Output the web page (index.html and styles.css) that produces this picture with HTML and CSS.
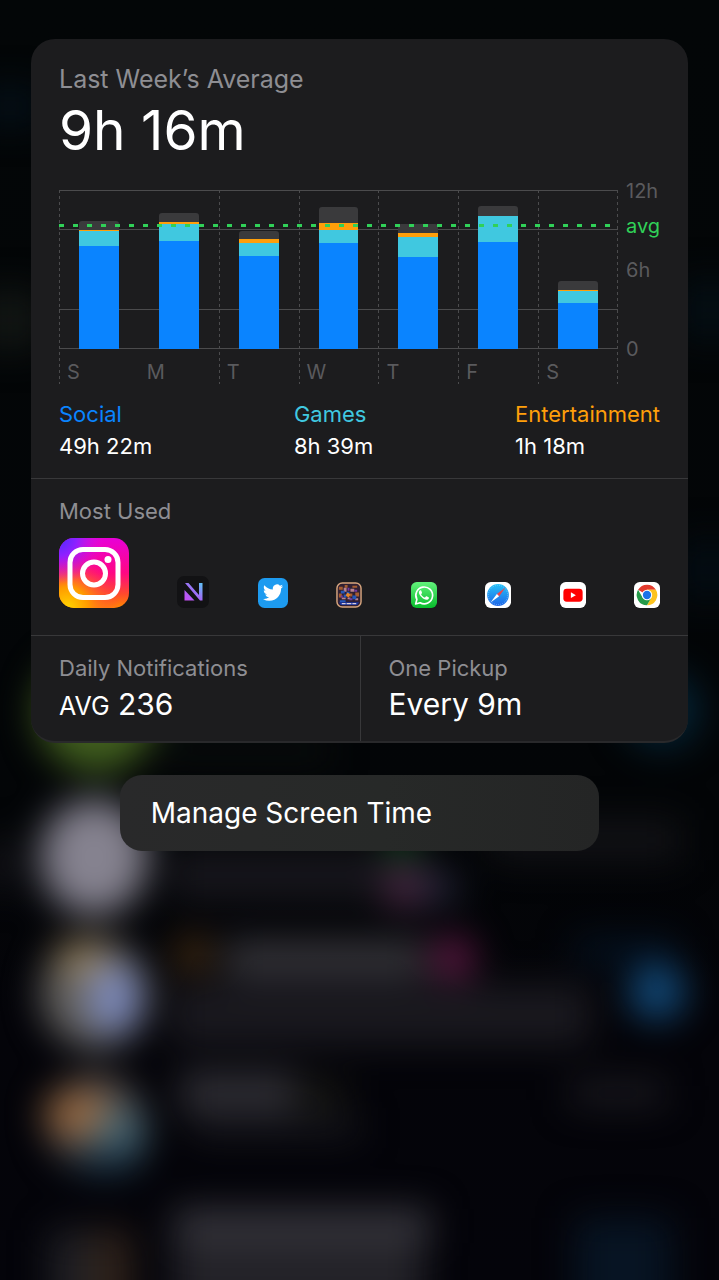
FILE: index.html
```html
<!DOCTYPE html>
<html lang="en">
<head>
<meta charset="utf-8">
<meta name="viewport" content="width=device-width, initial-scale=1">
<title>Screen Time</title>
<link rel="stylesheet" href="styles.css">
</head>
<body>
<svg class="backdrop" viewBox="0 0 719 1280" preserveAspectRatio="xMidYMid slice" aria-hidden="true">
  <defs>
    <filter id="soft" filterUnits="userSpaceOnUse" x="-60" y="-60" width="839" height="1400" color-interpolation-filters="sRGB"><feGaussianBlur stdDeviation="18"/></filter>
    <linearGradient id="ground" x1="0" y1="0" x2="0" y2="1">
      <stop offset="0" stop-color="#030607"/><stop offset=".65" stop-color="#030507"/><stop offset=".8" stop-color="#040409"/><stop offset="1" stop-color="#04040a"/>
    </linearGradient>
  </defs>
  <rect width="719" height="1280" fill="url(#ground)"/>
  <g filter="url(#soft)">
    <rect x="-20" y="88" width="60" height="36" fill="#041019"/>
    <rect x="-20" y="290" width="60" height="60" fill="#121614"/>
    <rect x="680" y="280" width="60" height="60" fill="#040e14"/>
    <rect x="680" y="540" width="60" height="60" fill="#030c13"/>
    <circle cx="97" cy="712" r="60" fill="#42601f"/>
    <circle cx="662" cy="710" r="38" fill="#042436"/>
    <rect x="160" y="740" width="170" height="20" fill="#0b0f0d"/>
    <rect x="-20" y="840" width="40" height="50" fill="#111116"/>
    <ellipse cx="94" cy="857" rx="54" ry="58" fill="#85828f"/>
    <rect x="170" y="850" width="260" height="50" fill="#17161c"/>
    <rect x="490" y="820" width="190" height="40" fill="#121216"/>
    <circle cx="402" cy="842" r="16" fill="#0c4a1a"/>
    <circle cx="404" cy="888" r="20" fill="#502a48"/>
    <circle cx="440" cy="888" r="18" fill="#25263a"/>
    <circle cx="95" cy="994" r="54" fill="#646260"/>
    <ellipse cx="84" cy="958" rx="30" ry="18" fill="#94805c"/>
    <ellipse cx="114" cy="998" rx="25" ry="36" fill="#7b89bd"/>
    <circle cx="193" cy="954" r="19" fill="#452d12"/>
    <rect x="225" y="940" width="200" height="38" fill="#353439"/>
    <circle cx="453" cy="958" r="22" fill="#5e1843"/>
    <rect x="170" y="985" width="420" height="60" fill="#1a191f"/>
    <rect x="575" y="940" width="100" height="22" fill="#041425"/>
    <circle cx="657" cy="992" r="28" fill="#124a7a"/>
    <circle cx="96" cy="1122" r="48" fill="#4a484a"/>
    <ellipse cx="80" cy="1114" rx="36" ry="25" fill="#966841"/>
    <ellipse cx="120" cy="1134" rx="25" ry="27" fill="#4a6a78"/>
    <ellipse cx="106" cy="1160" rx="34" ry="14" fill="#1b3345"/>
    <rect x="180" y="1072" width="115" height="40" fill="#302f35"/>
    <rect x="295" y="1078" width="50" height="34" fill="#151512"/>
    <rect x="190" y="1118" width="170" height="20" fill="#17171d"/>
    <rect x="570" y="1080" width="95" height="26" fill="#1a191f"/>
    <rect x="174" y="1208" width="256" height="36" fill="#34333a"/>
    <rect x="174" y="1244" width="250" height="90" fill="#232228"/>
    <rect x="50" y="1230" width="55" height="100" fill="#202025"/>
    <rect x="90" y="1230" width="42" height="100" fill="#2f221a"/>
    <rect x="575" y="1218" width="96" height="110" fill="#071423"/>
  </g>
</svg>

<main class="screen">
  <article class="card">
    <section class="usage">
      <h1 class="label label-large">Last Week’s Average</h1>
      <p class="total">9h 16m</p>

      <figure class="chart" aria-label="Screen time for each day of the week">
        <div class="plot">
          <div class="day"><div class="slot"><div class="bar"><i class="other" style="height:9px"></i><i class="fun" style="height:1px"></i><i class="games" style="height:15px"></i><i class="social" style="height:103px"></i></div></div><span class="name">S</span></div>
          <div class="day unruled"><div class="slot"><div class="bar"><i class="other" style="height:9px"></i><i class="fun" style="height:2px"></i><i class="games" style="height:17px"></i><i class="social" style="height:108px"></i></div></div><span class="name">M</span></div>
          <div class="day"><div class="slot"><div class="bar"><i class="other" style="height:8px"></i><i class="fun" style="height:4px"></i><i class="games" style="height:13px"></i><i class="social" style="height:93px"></i></div></div><span class="name">T</span></div>
          <div class="day"><div class="slot"><div class="bar"><i class="other" style="height:16px"></i><i class="fun" style="height:7px"></i><i class="games" style="height:13px"></i><i class="social" style="height:106px"></i></div></div><span class="name">W</span></div>
          <div class="day"><div class="slot"><div class="bar"><i class="other" style="height:9px"></i><i class="fun" style="height:4px"></i><i class="games" style="height:20px"></i><i class="social" style="height:92px"></i></div></div><span class="name">T</span></div>
          <div class="day"><div class="slot"><div class="bar"><i class="other" style="height:10px"></i><i class="games" style="height:26px"></i><i class="social" style="height:107px"></i></div></div><span class="name">F</span></div>
          <div class="day last"><div class="slot"><div class="bar"><i class="other" style="height:9px"></i><i class="fun" style="height:1px"></i><i class="games" style="height:12px"></i><i class="social" style="height:46px"></i></div></div><span class="name">S</span></div>
          <div class="average-line"></div>
        </div>
        <div class="axis">
          <span>12h</span>
          <span class="axis-avg">avg</span>
          <span class="axis-mid">6h</span>
          <span class="axis-zero">0</span>
        </div>
      </figure>

      <dl class="legend">
        <div><dt class="text-social">Social</dt><dd>49h 22m</dd></div>
        <div><dt class="text-games">Games</dt><dd>8h 39m</dd></div>
        <div><dt class="text-fun">Entertainment</dt><dd>1h 18m</dd></div>
      </dl>
    </section>

    <section class="most-used">
      <h2 class="label">Most Used</h2>
      <div class="apps">
        <svg class="app app-first" viewBox="0 0 70 70" role="img" aria-label="Instagram">
          <defs>
            <linearGradient id="ig-base" x1="0" y1="0" x2="0" y2="1"><stop offset="0" stop-color="#e800d8"/><stop offset=".5" stop-color="#ff0783"/><stop offset=".8" stop-color="#ff4a2c"/><stop offset="1" stop-color="#ff8a00"/></linearGradient>
            <radialGradient id="ig-blue" cx="0" cy="0" r=".65"><stop offset="0" stop-color="#4a2cff"/><stop offset=".4" stop-color="#9020ff"/><stop offset="1" stop-color="#e010e0" stop-opacity="0"/></radialGradient>
            <radialGradient id="ig-gold" cx=".12" cy="1" r=".75"><stop offset="0" stop-color="#ffd600"/><stop offset=".4" stop-color="#ff9a00"/><stop offset="1" stop-color="#ff3050" stop-opacity="0"/></radialGradient>
          </defs>
          <rect width="70" height="70" rx="15" fill="url(#ig-base)"/>
          <rect width="70" height="70" rx="15" fill="url(#ig-gold)"/>
          <rect width="70" height="70" rx="15" fill="url(#ig-blue)"/>
          <rect x="11" y="11.500" width="48" height="48" rx="13" fill="none" stroke="#fff" stroke-width="5"/>
          <circle cx="35" cy="35.500" r="11.500" fill="none" stroke="#fff" stroke-width="5"/>
          <circle cx="49" cy="21.500" r="3.500" fill="#fff"/>
        </svg>
        <svg class="app app-second" viewBox="0 0 32 32" role="img" aria-label="Neon app">
          <defs><linearGradient id="neon" x1="0" y1="1" x2="1" y2="0"><stop offset="0" stop-color="#c94bf2"/><stop offset=".5" stop-color="#a06cf5"/><stop offset="1" stop-color="#5cc8f8"/></linearGradient></defs>
          <rect width="32" height="32" rx="7" fill="#121214"/>
          <path d="M7.500 14 17.500 24.500H7.500ZM8 7h3.500l10.500 12V7h3.500v17.500h-2.500Z" fill="url(#neon)"/>
        </svg>
        <svg class="app app-third" viewBox="0 0 30 30" role="img" aria-label="Twitter">
          <rect width="30" height="30" rx="6.500" fill="#1d9bf0"/>
          <path transform="translate(5 4.500) scale(.84)" fill="#fff" d="M23.950 4.570a10 10 0 0 1-2.820.77 4.960 4.960 0 0 0 2.160-2.720c-.95.55-2 .95-3.130 1.180a4.920 4.920 0 0 0-8.380 4.480C7.690 8.100 4.070 6.130 1.640 3.160a4.820 4.820 0 0 0-.67 2.480c0 1.710.87 3.210 2.190 4.100a4.900 4.900 0 0 1-2.230-.62v.06a4.920 4.920 0 0 0 3.950 4.830 5 5 0 0 1-2.210.08 4.940 4.940 0 0 0 4.600 3.420A9.870 9.870 0 0 1 0 19.540a13.990 13.990 0 0 0 7.550 2.210c9.050 0 14-7.500 14-13.980 0-.21 0-.42-.02-.63a9.940 9.940 0 0 0 2.420-2.570z"/>
        </svg>
        <svg class="app" viewBox="0 0 27 27" role="img" aria-label="Arcade game">
          <rect x="1" y="1" width="25" height="25" rx="5.500" fill="#302032" stroke="#d7a57e" stroke-width="1.500"/>
          <path d="M3 5h4v3H3zM17 4h5v2h-5zM3 12h3v4H3zM20 11h4v4h-4zM9 3h3v3H9zM14 12h3v3h-3z" fill="#a65c30"/>
          <path d="M8 6h3v4H8zM15 7h4v3h-4zM6 16h4v2H6zM12 16h3v2h-3zM20 17h3v2h-3z" fill="#b5828f"/>
          <path d="M5 9h4v3H5zM11 10h3v4h-3zM17 14h4v4h-4zM8 13h3v3H8zM4 19h6v2H4z" fill="#2457ba"/>
          <path d="M12 6h2v3h-2zM19 8h3v2h-3zM14 17h3v2h-3zM5 14h2v2H5z" fill="#713ba1"/>
          <path d="M3 21h21l-2 3H5z" fill="#1732a0"/>
          <path d="M6 22.500h4m1 0h5m1 0h4" stroke="#d8ccd8" stroke-width="1.200"/>
          <path d="m12 11 3 2-2 3-3-2z" fill="#e98524"/>
        </svg>
        <svg class="app" viewBox="0 0 27 27" role="img" aria-label="WhatsApp">
          <defs><linearGradient id="wa" x1="0" y1="0" x2="0" y2="1"><stop offset="0" stop-color="#62f27b"/><stop offset="1" stop-color="#08bc2c"/></linearGradient></defs>
          <rect width="27" height="27" rx="6" fill="url(#wa)"/>
          <path d="m4.800 22.800 1.300-4.700A8.700 8.700 0 1 1 9.500 21.500Z" fill="none" stroke="#fff" stroke-width="1.700" stroke-linejoin="round"/>
          <path d="M10.700 9.100c-.3-.6-.5-.6-.8-.6-1.100 0-1.700 1.200-1.700 2.200 0 3 4.700 7.800 8 7.800 1.200 0 2.400-.9 2.400-2 0-.4 0-.5-.4-.7l-2-1c-.4-.2-.6-.1-.8.200l-.8 1c-.2.200-.4.300-.7.100-1.300-.5-2.600-1.700-3.300-3-.2-.3-.1-.4.100-.7l.6-.8c.2-.2.200-.4.100-.7Z" fill="#fff"/>
        </svg>
        <svg class="app" viewBox="0 0 27 27" role="img" aria-label="Safari">
          <defs><linearGradient id="sf" x1="0" y1="0" x2="0" y2="1"><stop offset="0" stop-color="#26c1f7"/><stop offset="1" stop-color="#1d65e8"/></linearGradient></defs>
          <rect width="27" height="27" rx="6" fill="#fff"/>
          <circle cx="13.500" cy="13.500" r="11.300" fill="url(#sf)"/>
          <circle cx="13.500" cy="13.500" r="10" fill="none" stroke="#a8ddfb" stroke-width="1" stroke-dasharray=".5 1.600"/>
          <path d="m21.300 5.700-6.600 9.100-2.400-2.400Z" fill="#f0444a"/>
          <path d="m5.700 21.300 6.600-8.900 2.400 2.400Z" fill="#fff"/>
        </svg>
        <svg class="app" viewBox="0 0 27 27" role="img" aria-label="YouTube">
          <rect width="27" height="27" rx="6" fill="#fff"/>
          <rect x="3.500" y="7" width="20" height="13.500" rx="3.500" fill="#f00"/>
          <path d="m11.300 10.700 5.200 3-5.200 3Z" fill="#fff"/>
        </svg>
        <svg class="app" viewBox="0 0 27 27" role="img" aria-label="Chrome">
          <rect width="27" height="27" rx="6" fill="#fff"/>
          <path d="M13.500 13.500 4.230 8.150A10.700 10.700 0 0 1 22.770 8.150H13.500Z" fill="#e33b2e"/>
          <path d="M22.770 8.150A10.700 10.700 0 0 1 13.500 24.200L18.130 16.180 13.500 8.150Z" fill="#fcc31e"/>
          <path d="M13.500 24.200A10.700 10.700 0 0 1 4.230 8.150L8.870 16.180 13.500 18.850 18.130 16.180Z" fill="#269b4a"/>
          <circle cx="13.500" cy="13.500" r="5.400" fill="#fff"/>
          <circle cx="13.500" cy="13.500" r="4.300" fill="#1a73e8"/>
        </svg>
      </div>
    </section>

    <div class="stats">
      <section class="stat">
        <h2 class="label">Daily Notifications</h2>
        <p class="value"><span class="prefix">AVG</span> 236</p>
      </section>
      <section class="stat">
        <h2 class="label">One Pickup</h2>
        <p class="value">Every 9m</p>
      </section>
    </div>
  </article>

  <button class="manage" type="button">Manage Screen Time</button>
</main>
</body>
</html>
```

FILE: styles.css
```css
* {
  box-sizing: border-box;
}

body {
  position: relative;
  min-height: 100vh;
  margin: 0;
  background: #030507;
  color: #fff;
  font-family: Inter, "Liberation Sans", sans-serif;
}

h1, h2, p, dl, dd, figure {
  margin: 0;
}

.backdrop {
  position: absolute;
  inset: 0;
  width: 100%;
  height: 100%;
}

.screen {
  position: relative;
  display: flex;
  flex-direction: column;
  align-items: center;
  gap: 32px;
  padding: 39px 31px;
}

.card {
  width: 100%;
  overflow: hidden;
  border-radius: 24px;
  border-bottom: 2px solid #29292b;
  background: #1c1c1e;
}

.label {
  color: #8e8e93;
  font-size: 22px;
  font-weight: 400;
  line-height: 32px;
}

.label-large {
  font-size: 25px;
}

.usage {
  padding: 24px 28px 16px;
}

.total {
  font-size: 55px;
  line-height: 70px;
}

.chart {
  display: flex;
  gap: 8px;
  margin-top: 25px;
}

.plot {
  position: relative;
  display: flex;
  flex: 1;
  background:
    linear-gradient(#4b4b4d, #4b4b4d) 0 0 / 100% 1px no-repeat,
    linear-gradient(#4b4b4d, #4b4b4d) 0 39px / 100% 1px no-repeat,
    linear-gradient(#4b4b4d, #4b4b4d) 0 119px / 100% 1px no-repeat,
    linear-gradient(#4b4b4d, #4b4b4d) 0 158px / 100% 1px no-repeat;
}

.day {
  --rule: repeating-linear-gradient(#4b4b4d 0 3px, transparent 3px 6px);
  flex: 1;
  background: var(--rule) 0 0 / 1px 100% no-repeat;
}

.day.unruled {
  background: none;
}

.day.last {
  background:
    var(--rule) 0 0 / 1px 100% no-repeat,
    var(--rule) 100% 0 / 1px 100% no-repeat;
}

.slot {
  display: flex;
  align-items: flex-end;
  justify-content: center;
  height: 159px;
}

.bar {
  width: 50%;
  overflow: hidden;
  border-radius: 3px 3px 0 0;
}

.bar i {
  display: block;
}

.other { background: #3a3a3c; }
.fun { background: #ff9f0a; }
.games { background: #40c8e0; }
.social { background: #0a84ff; }

.name {
  display: block;
  height: 35px;
  padding: 11px 8px 0;
  color: #5a5a5d;
  font-size: 20px;
  line-height: 24px;
}

.average-line {
  position: absolute;
  top: 34px;
  right: 0;
  left: 0;
  height: 3px;
  background: repeating-linear-gradient(90deg, #30d158 0 5px, transparent 5px 14px);
}

.axis {
  display: flex;
  flex-direction: column;
  width: 34px;
  margin-top: -11px;
  color: #5a5a5d;
  font-size: 20px;
  line-height: 24px;
}

.axis-avg {
  margin-top: 11px;
  color: #30d158;
}

.axis-mid { margin-top: 20px; }
.axis-zero { margin-top: 55px; }

.legend {
  display: flex;
  justify-content: space-between;
  margin-top: 14px;
  font-size: 22px;
  line-height: 32px;
}

.text-social { color: #0a84ff; }
.text-games { color: #40c8e0; }
.text-fun { color: #ff9f0a; }

.most-used {
  padding: 16px 28px 27px;
  border-top: 1px solid #38383a;
}

.apps {
  display: flex;
  align-items: flex-end;
  justify-content: space-between;
  margin-top: 11px;
}

.app {
  display: block;
  width: 26px;
  height: 26px;
}

.app-first {
  width: 70px;
  height: 70px;
}

.app-second {
  width: 32px;
  height: 32px;
}

.app-third {
  width: 30px;
  height: 30px;
}

.stats {
  display: grid;
  grid-template-columns: 1fr 1fr;
  border-top: 1px solid #38383a;
}

.stat {
  padding: 16px 28px 15px;
}

.stat + .stat {
  border-left: 1px solid #38383a;
}

.value {
  font-size: 30px;
  line-height: 40px;
}

.prefix {
  font-size: 25px;
}

.manage {
  width: 73%;
  padding: 20px 31px;
  border: 0;
  border-radius: 22px;
  background: linear-gradient(90deg, #29292a, #272928 55%, #242525);
  color: #fff;
  font-family: inherit;
  font-size: 28px;
  line-height: 36px;
  text-align: left;
}
```
